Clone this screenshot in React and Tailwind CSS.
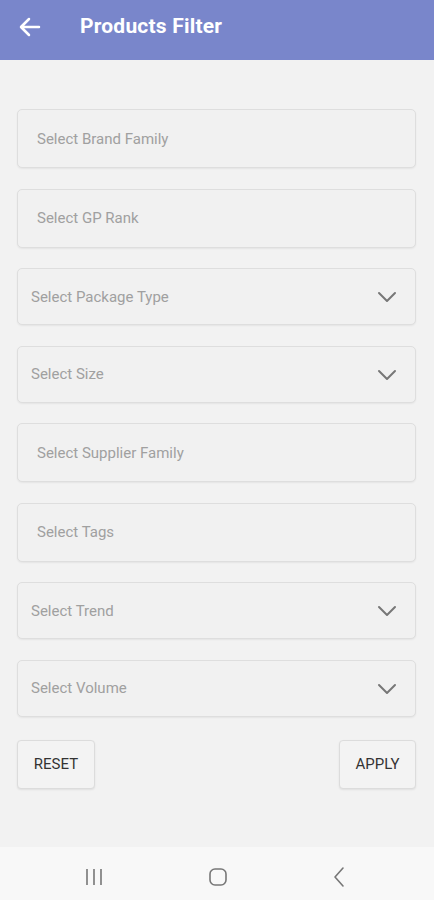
import React from "react";

const fields = [
  { label: "Select Brand Family", dd: false },
  { label: "Select GP Rank", dd: false },
  { label: "Select Package Type", dd: true },
  { label: "Select Size", dd: true },
  { label: "Select Supplier Family", dd: false },
  { label: "Select Tags", dd: false },
  { label: "Select Trend", dd: true },
  { label: "Select Volume", dd: true },
];

function Chevron() {
  return (
    <svg width="20" height="12" viewBox="0 0 20 12" fill="none">
      <path d="M2 2l8 8 8-8" stroke="#777" strokeWidth="2" strokeLinecap="round" strokeLinejoin="round" />
    </svg>
  );
}

export default function App() {
  return (
    <div className="w-[434px] h-[900px] bg-[#f2f2f2] flex flex-col" style={{ fontFamily: "Roboto, 'Liberation Sans', sans-serif" }}>
      <div className="h-[60px] bg-[#7986cb] flex items-center shrink-0 pb-[6px]">
        <div className="w-[80px] pl-[19px] flex items-center">
          <svg width="22" height="20" viewBox="0 0 22 20" fill="none">
            <path d="M20 10H3M10 2L2 10l8 8" stroke="white" strokeWidth="2.5" strokeLinecap="round" strokeLinejoin="round" />
          </svg>
        </div>
        <span className="text-white text-[21px] font-bold tracking-[0.2px]">Products Filter</span>
      </div>
      <div className="flex-1 px-[17px] pt-[49px] pr-[18px]">
        <div className="flex flex-col gap-[20.5px]">
          {fields.map((f) =>
            f.dd ? (
              <div key={f.label} className="h-[57px] rounded-[5px] border border-[#dedede] bg-[#f1f1f1] shadow-[0_1px_2px_rgba(0,0,0,0.06)] flex items-center justify-between pl-[13px] pr-[18px] pt-[1px]">
                <span className="text-[15px] text-[#a0a0a0]">{f.label}</span>
                <Chevron />
              </div>
            ) : (
              <div key={f.label} className="h-[59px] rounded-[5px] border border-[#dedede] bg-[#f1f1f1] shadow-[0_1px_2px_rgba(0,0,0,0.06)] flex items-center pl-[19px] pt-[1px]">
                <span className="text-[15px] text-[#a0a0a0]">{f.label}</span>
              </div>
            )
          )}
        </div>
        <div className="flex justify-between mt-[23px]">
          <div className="w-[78px] h-[49px] rounded-[4px] border border-[#dcdcdc] bg-[#f3f3f3] shadow-[0_1px_2px_rgba(0,0,0,0.08)] flex items-center justify-center text-[15px] text-[#333]">RESET</div>
          <div className="w-[77px] h-[49px] rounded-[4px] border border-[#dcdcdc] bg-[#f3f3f3] shadow-[0_1px_2px_rgba(0,0,0,0.08)] flex items-center justify-center text-[15px] text-[#333]">APPLY</div>
        </div>
      </div>
      <div className="h-[53px] bg-[#f8f8f8] flex items-center shrink-0 pt-[6px]">
        <div className="flex items-center justify-between w-full pl-[84px] pr-[88px]">
          <svg width="20" height="20" viewBox="0 0 20 20" fill="none">
            <path d="M3 2v16M10 2v16M17 2v16" stroke="#777" strokeWidth="1.6" />
          </svg>
          <svg width="20" height="20" viewBox="0 0 20 20" fill="none">
            <rect x="2" y="2" width="16" height="16" rx="5" stroke="#777" strokeWidth="1.6" />
          </svg>
          <svg width="14" height="22" viewBox="0 0 14 22" fill="none">
            <path d="M11 2L3 11l8 9" stroke="#777" strokeWidth="1.6" strokeLinecap="round" strokeLinejoin="round" />
          </svg>
        </div>
      </div>
    </div>
  );
}
